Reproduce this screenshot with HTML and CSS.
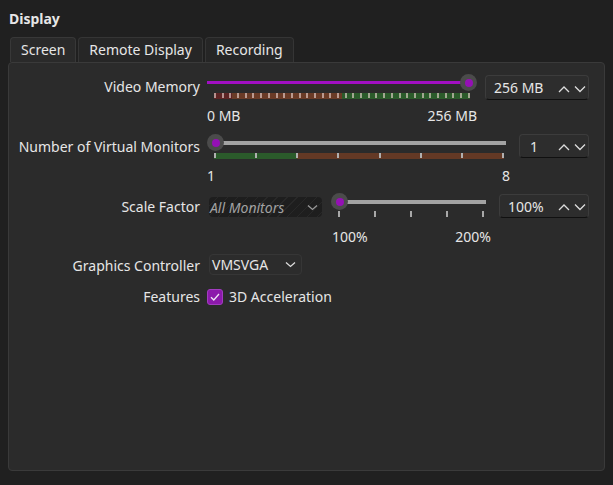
FILE: index.html
```html
<!DOCTYPE html>
<html>
<head>
<meta charset="utf-8">
<link rel="stylesheet" href="styles.css">
</head>
<body>
<div class="title">Display</div>
<div class="tabs">
  <div class="tab active">Screen</div>
  <div class="tab">Remote Display</div>
  <div class="tab">Recording</div>
</div>
<div class="panel">
  <div class="row r1">
    <div class="label">Video Memory</div>
    <div class="slider s1">
      <div class="track-area">
        <div class="track purple" style="left:0;width:262px"></div>
        <div class="thumb" style="left:253px"><span class="dot"></span></div>
      </div>
      <div class="bar bar1">
        <i></i><i></i><i></i><i></i><i></i><i></i><i></i><i></i><i></i><i></i><i></i><i></i><i></i><i></i><i></i><i></i><i></i>
        <i></i><i></i><i></i><i></i><i></i><i></i><i></i><i></i><i></i><i></i><i></i><i></i><i></i><i></i><i></i><i></i><i></i>
      </div>
      <div class="scale"><span>0 MB</span><span>256 MB</span></div>
    </div>
    <div class="spin sp1">
      <span class="val">256 MB</span>
      <span class="arrows">
        <svg width="12" height="8" viewBox="0 0 12 8"><polyline points="1,7 6,2 11,7"/></svg>
        <svg width="12" height="8" viewBox="0 0 12 8"><polyline points="1,1.5 6,6.5 11,1.5"/></svg>
      </span>
    </div>
  </div>

  <div class="row r2">
    <div class="label">Number of Virtual Monitors</div>
    <div class="slider s2">
      <div class="track-area">
        <div class="track grey" style="left:8px;width:291px"></div>
        <div class="thumb" style="left:0"><span class="dot"></span></div>
      </div>
      <div class="bar bar2">
        <i></i><i></i><i></i><i></i><i></i><i></i><i></i><i></i>
      </div>
      <div class="scale"><span>1</span><span>8</span></div>
    </div>
    <div class="spin sp2">
      <span class="val">1</span>
      <span class="arrows">
        <svg width="12" height="8" viewBox="0 0 12 8"><polyline points="1,7 6,2 11,7"/></svg>
        <svg width="12" height="8" viewBox="0 0 12 8"><polyline points="1,1.5 6,6.5 11,1.5"/></svg>
      </span>
    </div>
  </div>

  <div class="row r3">
    <div class="label">Scale Factor</div>
    <div class="combo hatched">
      <span class="val">All Monitors</span>
      <svg width="11" height="7" viewBox="0 0 11 7"><polyline points="1,1.5 5.5,5.5 10,1.5"/></svg>
    </div>
    <div class="slider s3">
      <div class="track-area">
        <div class="track grey" style="left:7px;width:147px"></div>
        <div class="thumb" style="left:-1px"><span class="dot"></span></div>
      </div>
      <div class="ticks3"><i></i><i></i><i></i><i></i><i></i></div>
      <div class="scale"><span>100%</span><span>200%</span></div>
    </div>
    <div class="spin sp3">
      <span class="val">100%</span>
      <span class="arrows">
        <svg width="12" height="8" viewBox="0 0 12 8"><polyline points="1,7 6,2 11,7"/></svg>
        <svg width="12" height="8" viewBox="0 0 12 8"><polyline points="1,1.5 6,6.5 11,1.5"/></svg>
      </span>
    </div>
  </div>

  <div class="row r4">
    <div class="label">Graphics Controller</div>
    <div class="combo plain">
      <span class="val">VMSVGA</span>
      <svg width="11" height="7" viewBox="0 0 11 7"><polyline points="1,1.5 5.5,5.5 10,1.5"/></svg>
    </div>
  </div>

  <div class="row r5">
    <div class="label">Features</div>
    <div class="check">
      <svg width="16" height="16" viewBox="0 0 16 16"><polyline points="4,8.2 6.8,11 12,5"/></svg>
    </div>
    <div class="check-text">3D Acceleration</div>
  </div>
</div>
</body>
</html>
```

FILE: styles.css
```css
html, body {
  margin: 0;
  padding: 0;
}
body {
  width: 613px;
  height: 485px;
  background: #202020;
  color: #e6e6e6;
  font-family: "Noto Sans", "Open Sans", sans-serif;
  font-size: 14px;
  overflow: hidden;
}
.title {
  font-weight: bold;
  font-size: 14px;
  line-height: 20px;
  padding: 9px 0 0 9px;
  height: 20px;
}
.tabs {
  display: flex;
  margin: 8px 0 0 10px;
  gap: 2px;
  height: 25px;
}
.tab {
  box-sizing: border-box;
  height: 25px;
  line-height: 23px;
  padding: 0 10px;
  border: 1px solid #353535;
  border-bottom: none;
  border-radius: 4px 4px 0 0;
  background: #262626;
}
.tab.active {
  background: #2a2a2a;
  border-color: #383838;
}
.panel {
  box-sizing: border-box;
  margin-left: 8px;
  width: 597px;
  height: 409px;
  border: 1px solid #3a3a3a;
  border-radius: 4px;
  background: #2b2b2b;
}
.row {
  display: flex;
  align-items: flex-start;
}
.r1 { height: 68px; }
.r2 { height: 60px; }
.r3 { height: 59px; }
.r4 { height: 31px; }
.label {
  width: 191px;
  text-align: right;
  line-height: 20px;
  margin-top: 6px;
  flex: none;
  white-space: nowrap;
}
.r1 .label { margin-top: 14px; }

/* sliders */
.slider {
  flex: none;
}
.track-area {
  position: relative;
  height: 17px;
}
.track {
  position: absolute;
  top: 7px;
  height: 4px;
}
.track.purple {
  top: 7px;
  height: 3px;
  background: #a10fc2;
}
.track.grey {
  background: #a3a3a3;
}
.thumb {
  position: absolute;
  top: 0;
  width: 17px;
  height: 17px;
  border-radius: 50%;
  background: #4b4b4b;
  display: flex;
  align-items: center;
  justify-content: center;
}
.dot {
  width: 8px;
  height: 8px;
  border-radius: 50%;
  background: #9510b5;
}
.bar {
  margin-top: 2px;
  margin-left: 7px;
  height: 6px;
  display: flex;
  justify-content: space-between;
  align-items: flex-start;
}
.bar i {
  display: block;
  width: 2px;
  height: 5px;
  background: rgba(235, 215, 210, 0.62);
}
.bar1 {
  width: 256px;
  background: linear-gradient(to right, #5d2424 0 18px, #6a3b26 18px 128px, #2b5b2b 128px);
}
.bar2 {
  width: 290px;
  background: linear-gradient(to right, #2b5b2b 0 83px, #643925 83px);
}
.bar2 i {
  background: #b0b0b0;
}
.scale {
  display: flex;
  justify-content: space-between;
  line-height: 16px;
  margin-top: 9px;
}
.s1 {
  margin: 11px 0 0 7px;
  width: 270px;
}
.s2 {
  margin: 3px 0 0 7px;
  width: 303px;
}
.s3 {
  margin: 2px 0 0 10px;
  width: 159px;
}
.ticks3 {
  display: flex;
  justify-content: space-between;
  margin: 1px 0 0 6px;
  width: 146px;
  height: 6px;
}
.ticks3 i {
  display: block;
  width: 2px;
  height: 6px;
  background: #a8a8a8;
}
.s3 .scale { margin-top: 12px; }

/* spin boxes */
.spin {
  box-sizing: border-box;
  flex: none;
  display: flex;
  align-items: center;
  border: 1px solid #3c3c3c;
  border-bottom-color: #101010;
  border-radius: 4px;
  background: #2d2d2d;
  padding: 0 2px 0 8px;
}
.spin .val { flex: 1; }
.arrows {
  display: flex;
  gap: 4px;
  margin-top: 2px;
}
.arrows svg polyline,
.combo svg polyline {
  fill: none;
  stroke: #dcdcdc;
  stroke-width: 1.3;
}
.sp1 { margin: 12px 0 0 8px; width: 104px; height: 25px; }
.sp2 { margin: 3px 0 0 9px; width: 70px; height: 24px; padding-left: 10px; }
.sp3 { margin: 3px 0 0 8px; width: 90px; height: 24px; }

/* combo boxes */
.combo {
  box-sizing: border-box;
  flex: none;
  display: flex;
  align-items: center;
  border-radius: 4px;
  margin-left: 9px;
}
.combo .val { flex: 1; white-space: nowrap; }
.hatched {
  margin-top: 6px;
  width: 113px;
  height: 20px;
  padding: 0 4px 0 1px;
  background: repeating-linear-gradient(135deg, #1e1e1e 0 6px, #282828 6px 7px);
  color: #a2a2a2;
  font-style: italic;
}
.hatched svg polyline { stroke: #9a9a9a; }
.plain {
  margin-top: 4px;
  width: 93px;
  height: 21px;
  padding: 0 5px 0 2px;
  border: 1px solid #363636;
  background: #2c2c2c;
}

/* checkbox */
.check {
  flex: none;
  box-sizing: border-box;
  margin: 8px 0 0 7px;
  width: 16px;
  height: 16px;
  border-radius: 3px;
  background: #8c19ab;
  border: 1px solid #a23cc0;
}
.check svg {
  display: block;
  margin: -1px 0 0 -1px;
}
.check polyline {
  fill: none;
  stroke: #efe4f4;
  stroke-width: 1.3;
}
.check-text {
  margin: 6px 0 0 6px;
  line-height: 20px;
}
```
